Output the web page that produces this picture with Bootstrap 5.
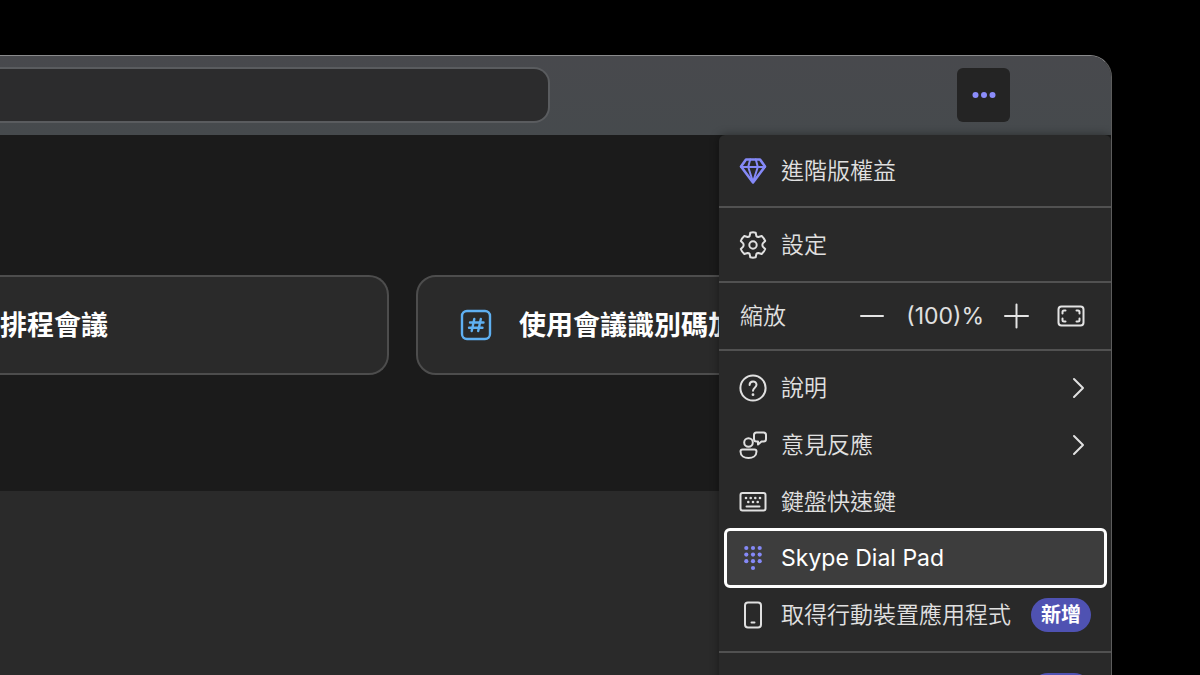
<!DOCTYPE html>
<html lang="zh-Hant">
<head>
<meta charset="utf-8">
<meta name="viewport" content="width=device-width, initial-scale=1">
<title>Skype</title>
<link href="https://cdn.jsdelivr.net/npm/bootstrap@5.3.0/dist/css/bootstrap.min.css" rel="stylesheet">
<style>
  body { background: #000; color: #fff; font-family: Inter, "Noto Sans CJK TC", sans-serif; }
  .stage { padding: 55px 88px 0 0; }
  .app-window { background: #2a2a2a; border: 1px solid #5c5c5c; border-top-color: #8a8a8c; border-width: 1px 1px 0 0; border-radius: 0 22px 0 0; }
  .title-bar { background: linear-gradient(#48494d, #464a4d); padding: 11px 101px 12px 0; }
  .search-box, .search-box:focus { width: 550px; height: 56px; background: #2c2c2d; color: #fff; border: 2px solid #5a5c5f; border-left: 0; border-radius: 0 16px 16px 0; box-shadow: none; }
  .more-btn, .more-btn:hover { width: 53px; height: 54px; background: #242424; border-radius: 6px; color: #8b8cfa; }
  .hero { background: #1b1b1b; height: 356px; padding: 140px 0 0; gap: 27px; }
  .action-card { width: 389px; height: 100px; background: #2a2a2a; border: 2px solid #4d4d4d; border-radius: 20px; color: #fff; font-size: 27px; line-height: 40px; font-weight: 700; text-align: left; }
  .action-card span { padding-top: 2px; }
  .action-card.schedule { border-left: 0; border-radius: 0 20px 20px 0; }
  .join { padding: 0 41px; gap: 26px; }
  .side-menu { top: 79px; right: 0; width: 392px; background: #292929; border-radius: 6px 6px 0 0; box-shadow: 0 0 10px rgba(0,0,0,.4); font-size: 23px; line-height: 34px; font-weight: 350; color: #e0e0e0; }
  .group { border-bottom: 2px solid #515151; }
  .menu-row { width: 100%; height: 57px; padding: 0 26px 0 20px; border: 0; background: none; color: inherit; font-weight: inherit; text-align: left; gap: 14px; }
  .menu-row.lead-row { height: 71px; }
  .menu-row.tall { height: 73px; }
  .menu-row.selected { width: calc(100% - 9px); height: 60px; margin: -2px 4px -2px 5px; padding: 0 12px; border: 3px solid #fff; border-radius: 6px; background: #3d3d3d; color: #fff; font-weight: 400; }
  .menu-row.with-badge { padding-right: 20px; }
  .zoom-row { height: 68px; padding: 0 26px 0 21px; }
  .zoom-value { margin: 0 19px 0 22px; font-weight: 400; }
  .icon-btn { border: 0; background: none; color: #e4e4e4; }
  .new-badge { width: 60px; height: 34px; border-radius: 17px; background: #4f52b2; color: #fff; font-size: 20px; line-height: 34px; font-weight: 700; text-align: center; }
  svg { display: block; flex: none; fill: none; stroke: currentColor; stroke-width: 2; stroke-linecap: round; stroke-linejoin: round; }
  .dots { fill: currentColor; stroke: none; }
  .accent { color: #8589f7; }
  .gem { stroke-width: 2.600; }
  .hash { color: #5fb0f2; stroke-width: 2.4; }
</style>
</head>
<body class="vh-100 overflow-hidden">
<div class="stage vh-100">
  <div class="app-window position-relative h-100 overflow-hidden">
    <header class="title-bar d-flex align-items-center justify-content-between">
      <input type="search" class="form-control search-box" aria-label="搜尋">
      <button class="btn more-btn border-0 p-0 d-flex align-items-center justify-content-center" type="button" aria-label="更多" aria-expanded="true">
        <svg class="dots" width="24" height="8" viewBox="0 0 24 8"><circle cx="3.5" cy="4" r="3"/><circle cx="12" cy="4" r="3"/><circle cx="20.5" cy="4" r="3"/></svg>
      </button>
    </header>
    <main class="hero d-flex align-items-start overflow-hidden">
      <button class="action-card schedule flex-shrink-0 p-0 d-flex align-items-center" type="button"><span>排程會議</span></button>
      <button class="action-card join flex-shrink-0 d-flex align-items-center text-nowrap overflow-hidden" type="button">
        <svg class="hash" width="34" height="34" viewBox="0 0 34 34"><rect x="3" y="3" width="28" height="28" rx="5"/><path d="M15.300 11 12.700 23M21.800 11l-2.600 12M11 14.500H24.500M10 19.800H23.500"/></svg>
        <span>使用會議識別碼加</span>
      </button>
    </main>
    <nav class="side-menu position-absolute" aria-label="更多">
      <div class="group">
        <button class="menu-row lead-row d-flex align-items-center" type="button">
          <svg class="accent gem" width="28" height="28" viewBox="0 0 28 28"><path d="M7 2.500h14L26 9.500 14 25.500 2 9.500Z"/><path stroke-width="2" d="M2 10H26M9.200 10 14 25 18.800 10M11.200 2.500 9.200 10M16.800 2.500 18.800 10"/></svg>
          進階版權益
        </button>
      </div>
      <div class="group">
        <button class="menu-row tall d-flex align-items-center" type="button">
          <svg width="28" height="28" viewBox="0 0 28 28"><path d="M11.300 1.700Q14 1 16.700 1.700L17.400 5.100Q18 6 19.400 6L22.700 5Q24.900 7 26.200 10L23.800 12.400Q23 14 23.800 15.600L26.200 18Q25.200 20.800 22.700 23L19.400 22Q18 22 17.400 22.900L16.700 26.300Q14 27 11.300 26.300L10.600 22.900Q10 22 8.600 22L5.300 23Q2.800 20.800 1.800 18L4.200 15.600Q5 14 4.200 12.400L1.800 10Q2.800 7.200 5.300 5L8.600 6Q10 6 10.600 5.100Z"/><circle cx="14" cy="14" r="3.700"/></svg>
          設定
        </button>
      </div>
      <div class="group zoom-row d-flex align-items-center">
        <span class="me-auto">縮放</span>
        <button class="icon-btn p-0" type="button" aria-label="縮小"><svg width="24" height="26" viewBox="0 0 24 26"><path d="M1 13h22"/></svg></button>
        <span class="zoom-value">(100)%</span>
        <button class="icon-btn p-0" type="button" aria-label="放大"><svg width="26" height="26" viewBox="0 0 26 26"><path d="M2 13h23M13.500 1.500v23"/></svg></button>
        <button class="icon-btn p-0 ms-4 ps-1" type="button" aria-label="全螢幕"><svg width="28" height="22" viewBox="0 0 28 22"><rect x="1.500" y="1.500" width="25" height="19" rx="3"/><path d="M5.500 8.500V7Q5.500 5.500 7 5.500H8.500M19.500 5.500H21Q22.500 5.500 22.500 7V8.500M22.500 13.500V15Q22.500 16.500 21 16.500H19.500M8.500 16.500H7Q5.500 16.500 5.500 15V13.500"/></svg></button>
      </div>
      <div class="group pt-2 pb-2">
        <button class="menu-row d-flex align-items-center" type="button">
          <svg width="28" height="28" viewBox="0 0 28 28"><circle cx="14" cy="14" r="12.600"/><path d="M10.600 11c0-4.700 6.900-4.700 6.900-.3 0 2.900-3.500 3-3.500 6"/><circle class="dots" cx="14" cy="20.700" r="1.400"/></svg>
          <span class="me-auto">說明</span>
          <svg width="14" height="22" viewBox="0 0 14 22"><path d="M3 2l9 9-9 9"/></svg>
        </button>
        <button class="menu-row d-flex align-items-center" type="button">
          <svg width="28" height="28" viewBox="0 0 28 28"><circle cx="9.500" cy="11.500" r="4.300"/><path d="M3.500 18.500H15.500Q17.500 18.500 17.500 20.500C17.500 25 13.500 27 9.500 27S1.500 25 1.500 20.500Q1.500 18.500 3.500 18.500ZM17.500 1.500H24.500Q27 1.500 27 4V8Q27 10.500 24.500 10.500H22.500L19 13.500V10.500H17.500Q15 10.500 15 8V4Q15 1.500 17.500 1.500Z"/></svg>
          <span class="me-auto">意見反應</span>
          <svg width="14" height="22" viewBox="0 0 14 22"><path d="M3 2l9 9-9 9"/></svg>
        </button>
        <button class="menu-row d-flex align-items-center" type="button">
          <svg width="28" height="22" viewBox="0 0 28 22"><rect x="1.500" y="2" width="25" height="17.500" rx="2"/><path d="M7.500 15.500h13"/><g class="dots"><circle cx="7" cy="7" r="1.300"/><circle cx="11.700" cy="7" r="1.300"/><circle cx="16.300" cy="7" r="1.300"/><circle cx="21" cy="7" r="1.300"/><circle cx="9.300" cy="11" r="1.300"/><circle cx="14" cy="11" r="1.300"/><circle cx="18.700" cy="11" r="1.300"/></g></svg>
          鍵盤快速鍵
        </button>
        <button class="menu-row selected d-flex align-items-center" type="button">
          <svg class="accent dots" width="28" height="28" viewBox="0 0 28 28"><circle cx="7.300" cy="4" r="2.100"/><circle cx="14" cy="4" r="2.100"/><circle cx="20.700" cy="4" r="2.100"/><circle cx="7.300" cy="10.600" r="2.100"/><circle cx="14" cy="10.600" r="2.100"/><circle cx="20.700" cy="10.600" r="2.100"/><circle cx="7.300" cy="17.200" r="2.100"/><circle cx="14" cy="17.200" r="2.100"/><circle cx="20.700" cy="17.200" r="2.100"/><circle cx="14" cy="24" r="2.100"/></svg>
          Skype Dial Pad
        </button>
        <button class="menu-row with-badge d-flex align-items-center" type="button">
          <svg width="28" height="28" viewBox="0 0 28 28"><rect x="6" y="1.500" width="16" height="25" rx="3"/><path d="M12.500 21.500h3"/></svg>
          <span class="me-auto">取得行動裝置應用程式</span>
          <span class="new-badge">新增</span>
        </button>
      </div>
      <div class="pt-2">
        <button class="menu-row with-badge d-flex align-items-center" type="button" aria-label="新增項目"><span class="new-badge ms-auto"></span></button>
      </div>
    </nav>
  </div>
</div>
<script src="https://cdn.jsdelivr.net/npm/bootstrap@5.3.0/dist/js/bootstrap.bundle.min.js"></script>
</body>
</html>
